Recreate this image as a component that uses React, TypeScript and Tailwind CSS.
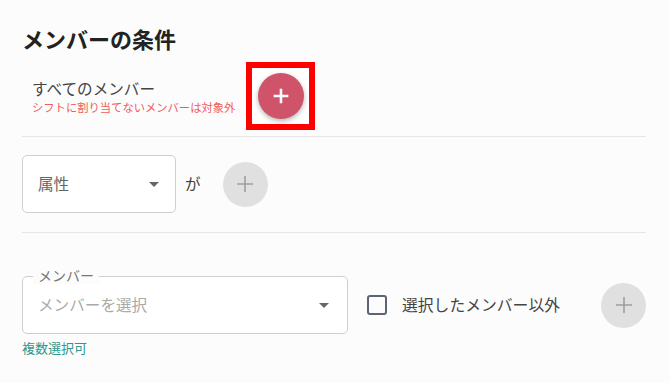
import React from 'react'

const font = { fontFamily: '"Noto Sans CJK JP", "Noto Sans", sans-serif' }

function PlusIcon({ className, strokeWidth = 2 }: { className?: string; strokeWidth?: number }) {
  return (
    <svg viewBox="0 0 24 24" className={className} fill="none" stroke="currentColor" strokeWidth={strokeWidth} strokeLinecap="butt">
      <path d="M12 4v16M4 12h16" />
    </svg>
  )
}

function ArrowDrop() {
  return (
    <svg viewBox="0 0 10 5" className="h-[5px] w-[10px] text-[#666]" fill="currentColor">
      <path d="M0 0h10L5 5z" />
    </svg>
  )
}

function GrayAdd() {
  return (
    <div className="flex h-[45px] w-[45px] shrink-0 items-center justify-center rounded-full bg-[#e0e0e0] text-[#9e9e9e]">
      <PlusIcon className="h-[24px] w-[24px]" strokeWidth={1.6} />
    </div>
  )
}

export default function App() {
  return (
    <div className="min-h-[383px] w-[670px] bg-[#fcfcfc]" style={font}>
      <div className="w-[646px] pl-[22px] pt-[22px]">
        <h2 className="text-[22px] font-bold leading-[32px] text-[#222]">メンバーの条件</h2>

        <div className="mt-[8px] flex items-center">
          <div className="pl-[10px]">
            <p className="text-[15.6px] leading-[22px] text-[#444]">すべてのメンバー</p>
            <p className="text-[11.3px] leading-[16px] text-[#f25b5b]">シフトに割り当てないメンバーは対象外</p>
          </div>
          <div className="ml-[11px] flex h-[68px] w-[69px] items-center justify-center border-[6px] border-[#ff0000] bg-white">
            <div className="flex h-[46px] w-[46px] items-center justify-center rounded-full bg-[#cf5469] text-white shadow-[0_2px_5px_rgba(0,0,0,0.3)]">
              <PlusIcon className="h-[22px] w-[22px]" strokeWidth={2.8} />
            </div>
          </div>
        </div>

        <div className="mt-[6px] border-t border-[#e6e6e6]" />

        <div className="mt-[18px] flex items-center">
          <div className="flex h-[58px] w-[154px] items-center justify-between rounded-[5px] border border-[#cfcfcf] bg-white pl-[15px] pr-[16px]">
            <span className="text-[15.6px] text-[#666]">属性</span>
            <ArrowDrop />
          </div>
          <span className="ml-[9px] text-[15.6px] text-[#444]">が</span>
          <div className="ml-[22px]">
            <GrayAdd />
          </div>
        </div>

        <div className="mt-[19px] border-t border-[#e6e6e6]" />

        <div className="mt-[43px] flex items-center">
          <div className="relative flex h-[58px] w-[326px] items-center justify-between rounded-[5px] border border-[#cfcfcf] bg-white pl-[15px] pr-[18px]">
            <span className="absolute left-[10px] top-[-11px] bg-[#fcfcfc] px-[5px] text-[14px] leading-[18px] text-[#777]">メンバー</span>
            <span className="text-[15.6px] text-[#aaa]">メンバーを選択</span>
            <ArrowDrop />
          </div>
          <div className="ml-[19px] flex items-center">
            <div className="h-[20px] w-[20px] rounded-[3px] border-2 border-[#5b6472]" />
            <span className="ml-[15px] text-[15.8px] text-[#444]">選択したメンバー以外</span>
          </div>
          <div className="ml-auto">
            <GrayAdd />
          </div>
        </div>
        <p className="mt-[5px] text-[13px] leading-[18px] text-[#2c978c]">複数選択可</p>
      </div>
    </div>
  )
}
